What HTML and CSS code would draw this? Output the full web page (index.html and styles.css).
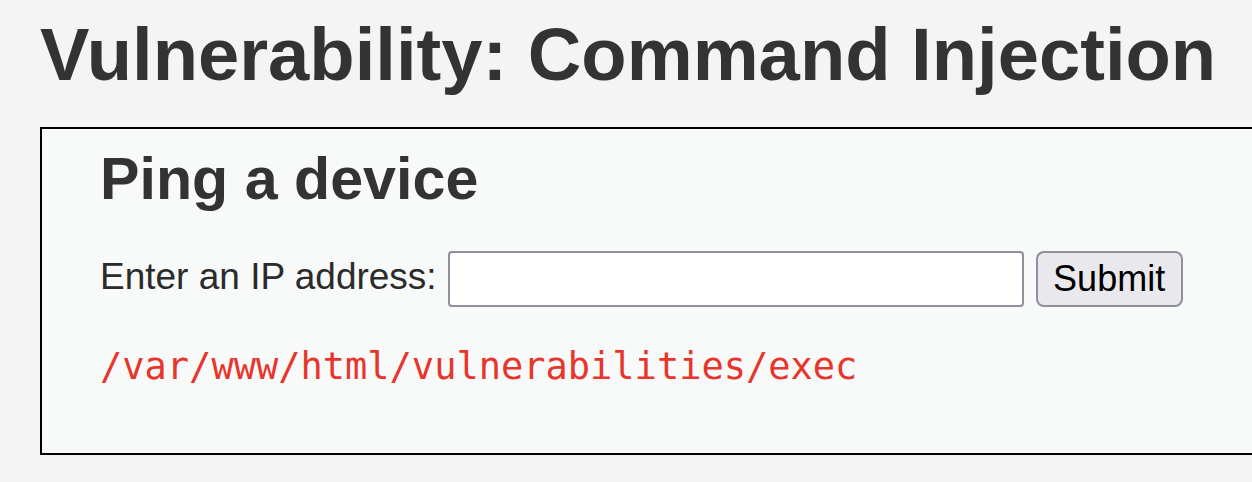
FILE: index.html
```html
<!DOCTYPE html>
<html>
<head>
<meta charset="utf-8">
<link rel="stylesheet" href="styles.css">
</head>
<body>
<div class="page">
  <h1 class="title">Vulnerability: Command Injection</h1>
  <div class="vulnerable-box">
    <h2 class="sub">Ping a device</h2>
    <form class="ping-form">
      <label class="ping-label">Enter an IP address:</label>
      <input class="ip-input" type="text">
      <button class="submit-btn" type="button">Submit</button>
    </form>
    <pre class="output">/var/www/html/vulnerabilities/exec</pre>
  </div>
</div>
</body>
</html>
```

FILE: styles.css
```css
html, body {
  margin: 0;
  padding: 0;
  background: #f4f4f4;
  overflow: hidden;
}
.page {
  padding: 11px 0 0 40px;
  font-family: "Liberation Sans", Arial, sans-serif;
  color: #333333;
}
.title {
  margin: 0;
  font-size: 74.2px;
  line-height: 87px;
  font-weight: bold;
  white-space: nowrap;
}
.vulnerable-box {
  margin-top: 29px;
  width: 1300px;
  height: 328px;
  box-sizing: border-box;
  border: 2px solid #000000;
  background: #f8f9f9;
  padding: 15px 0 0 58px;
}
.sub {
  margin: 0;
  font-size: 59.2px;
  line-height: 70px;
  font-weight: bold;
}
.ping-form {
  margin-top: 37px;
  display: flex;
  align-items: center;
  height: 56px;
}
.ping-label {
  font-size: 37px;
  color: #2b2b2b;
  margin-right: 11px;
  margin-bottom: 5px;
}
.ip-input {
  width: 576px;
  height: 56px;
  box-sizing: border-box;
  border: 2px solid #8f8f9d;
  border-radius: 4px;
  background: #ffffff;
  margin: 0 12px 0 0;
  padding: 0;
}
.submit-btn {
  width: 147px;
  height: 56px;
  box-sizing: border-box;
  border: 2px solid #8f8f9d;
  border-radius: 8px;
  background: #e9e9ed;
  font-family: "Liberation Sans", Arial, sans-serif;
  font-size: 36px;
  color: #000000;
  padding: 0;
  margin: 0;
}
.output {
  margin: 38px 0 0 0;
  font-family: "DejaVu Sans Mono", monospace;
  font-size: 37px;
  line-height: 44px;
  color: #e8352b;
}
```
